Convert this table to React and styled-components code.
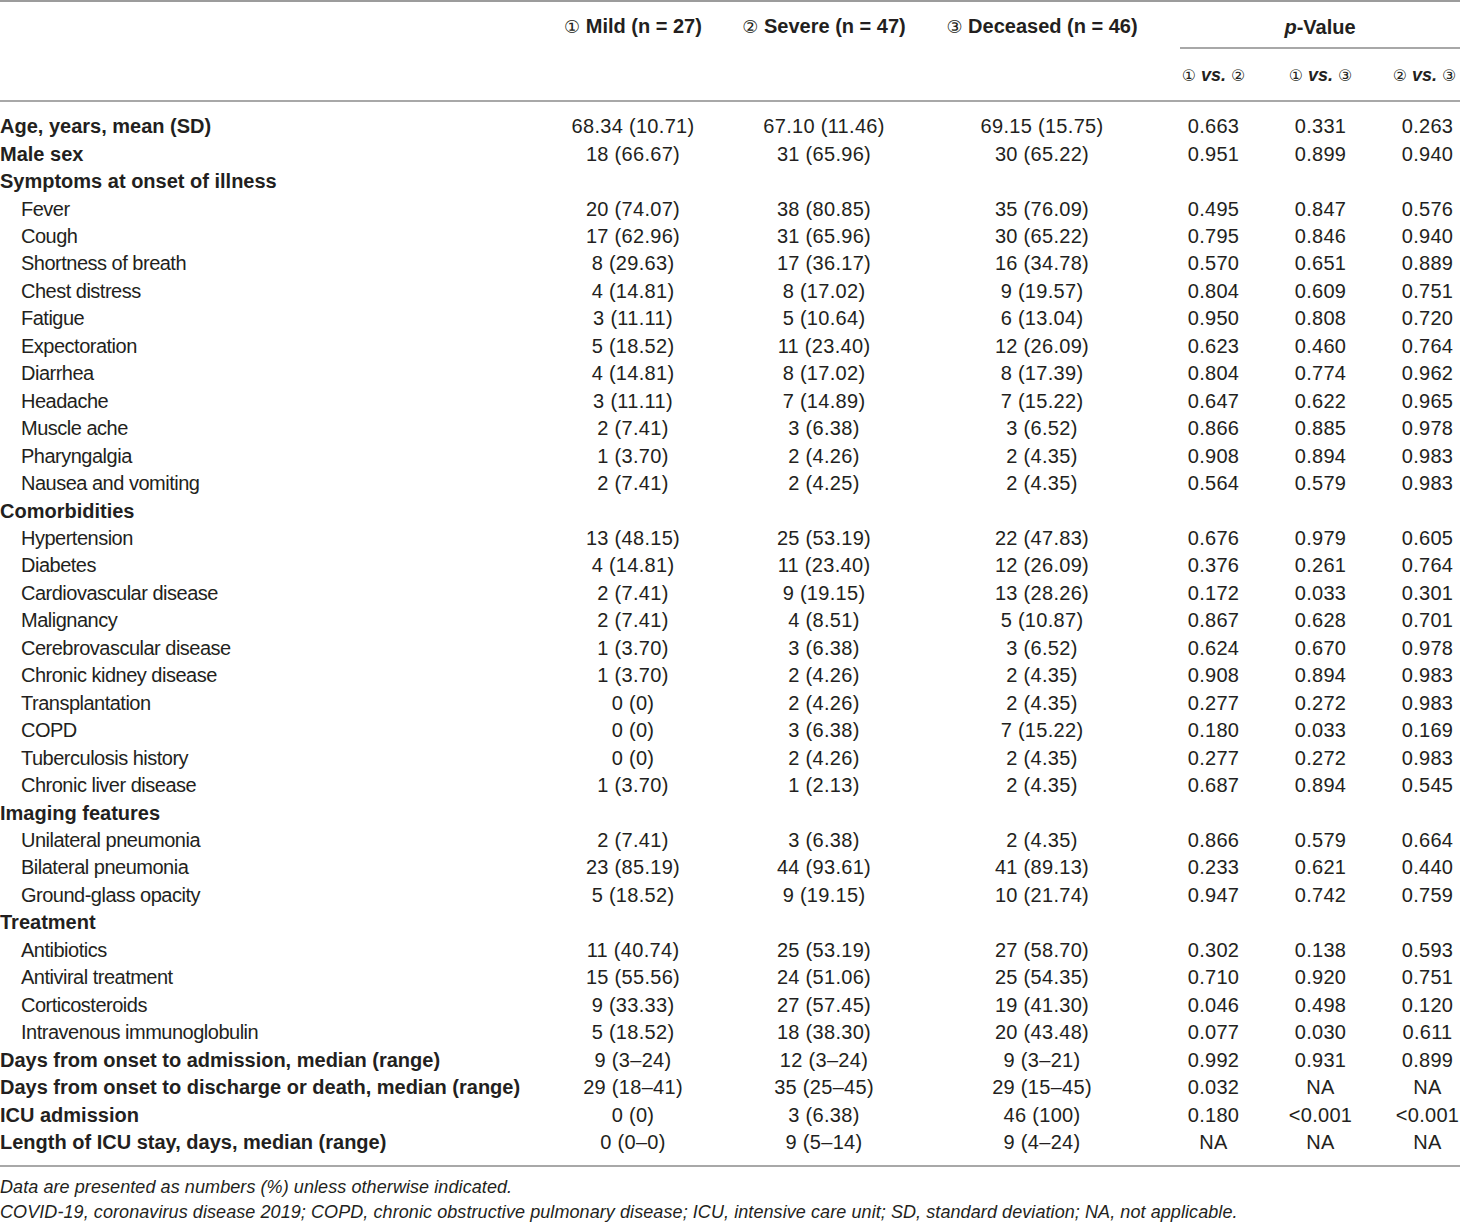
import React from "react";
import styled, { createGlobalStyle } from "styled-components";

const GlobalStyle = createGlobalStyle`
  html, body {
    margin: 0;
    padding: 0;
    background: #ffffff;
  }
  body {
    font-family: "Liberation Sans", Arial, sans-serif;
    color: #231f20;
  }
`;

const COLS = "542px 182px 200px 236px 107px 107px 86px";

const rows = [
  { label: "Age, years, mean (SD)", bold: true, v: ["68.34 (10.71)", "67.10 (11.46)", "69.15 (15.75)", "0.663", "0.331", "0.263"] },
  { label: "Male sex", bold: true, v: ["18 (66.67)", "31 (65.96)", "30 (65.22)", "0.951", "0.899", "0.940"] },
  { label: "Symptoms at onset of illness", bold: true },
  { label: "Fever", v: ["20 (74.07)", "38 (80.85)", "35 (76.09)", "0.495", "0.847", "0.576"] },
  { label: "Cough", v: ["17 (62.96)", "31 (65.96)", "30 (65.22)", "0.795", "0.846", "0.940"] },
  { label: "Shortness of breath", v: ["8 (29.63)", "17 (36.17)", "16 (34.78)", "0.570", "0.651", "0.889"] },
  { label: "Chest distress", v: ["4 (14.81)", "8 (17.02)", "9 (19.57)", "0.804", "0.609", "0.751"] },
  { label: "Fatigue", v: ["3 (11.11)", "5 (10.64)", "6 (13.04)", "0.950", "0.808", "0.720"] },
  { label: "Expectoration", v: ["5 (18.52)", "11 (23.40)", "12 (26.09)", "0.623", "0.460", "0.764"] },
  { label: "Diarrhea", v: ["4 (14.81)", "8 (17.02)", "8 (17.39)", "0.804", "0.774", "0.962"] },
  { label: "Headache", v: ["3 (11.11)", "7 (14.89)", "7 (15.22)", "0.647", "0.622", "0.965"] },
  { label: "Muscle ache", v: ["2 (7.41)", "3 (6.38)", "3 (6.52)", "0.866", "0.885", "0.978"] },
  { label: "Pharyngalgia", v: ["1 (3.70)", "2 (4.26)", "2 (4.35)", "0.908", "0.894", "0.983"] },
  { label: "Nausea and vomiting", v: ["2 (7.41)", "2 (4.25)", "2 (4.35)", "0.564", "0.579", "0.983"] },
  { label: "Comorbidities", bold: true },
  { label: "Hypertension", v: ["13 (48.15)", "25 (53.19)", "22 (47.83)", "0.676", "0.979", "0.605"] },
  { label: "Diabetes", v: ["4 (14.81)", "11 (23.40)", "12 (26.09)", "0.376", "0.261", "0.764"] },
  { label: "Cardiovascular disease", v: ["2 (7.41)", "9 (19.15)", "13 (28.26)", "0.172", "0.033", "0.301"] },
  { label: "Malignancy", v: ["2 (7.41)", "4 (8.51)", "5 (10.87)", "0.867", "0.628", "0.701"] },
  { label: "Cerebrovascular disease", v: ["1 (3.70)", "3 (6.38)", "3 (6.52)", "0.624", "0.670", "0.978"] },
  { label: "Chronic kidney disease", v: ["1 (3.70)", "2 (4.26)", "2 (4.35)", "0.908", "0.894", "0.983"] },
  { label: "Transplantation", v: ["0 (0)", "2 (4.26)", "2 (4.35)", "0.277", "0.272", "0.983"] },
  { label: "COPD", v: ["0 (0)", "3 (6.38)", "7 (15.22)", "0.180", "0.033", "0.169"] },
  { label: "Tuberculosis history", v: ["0 (0)", "2 (4.26)", "2 (4.35)", "0.277", "0.272", "0.983"] },
  { label: "Chronic liver disease", v: ["1 (3.70)", "1 (2.13)", "2 (4.35)", "0.687", "0.894", "0.545"] },
  { label: "Imaging features", bold: true },
  { label: "Unilateral pneumonia", v: ["2 (7.41)", "3 (6.38)", "2 (4.35)", "0.866", "0.579", "0.664"] },
  { label: "Bilateral pneumonia", v: ["23 (85.19)", "44 (93.61)", "41 (89.13)", "0.233", "0.621", "0.440"] },
  { label: "Ground-glass opacity", v: ["5 (18.52)", "9 (19.15)", "10 (21.74)", "0.947", "0.742", "0.759"] },
  { label: "Treatment", bold: true },
  { label: "Antibiotics", v: ["11 (40.74)", "25 (53.19)", "27 (58.70)", "0.302", "0.138", "0.593"] },
  { label: "Antiviral treatment", v: ["15 (55.56)", "24 (51.06)", "25 (54.35)", "0.710", "0.920", "0.751"] },
  { label: "Corticosteroids", v: ["9 (33.33)", "27 (57.45)", "19 (41.30)", "0.046", "0.498", "0.120"] },
  { label: "Intravenous immunoglobulin", v: ["5 (18.52)", "18 (38.30)", "20 (43.48)", "0.077", "0.030", "0.611"] },
  { label: "Days from onset to admission, median (range)", bold: true, v: ["9 (3–24)", "12 (3–24)", "9 (3–21)", "0.992", "0.931", "0.899"] },
  { label: "Days from onset to discharge or death, median (range)", bold: true, v: ["29 (18–41)", "35 (25–45)", "29 (15–45)", "0.032", "NA", "NA"] },
  { label: "ICU admission", bold: true, v: ["0 (0)", "3 (6.38)", "46 (100)", "0.180", "<0.001", "<0.001"] },
  { label: "Length of ICU stay, days, median (range)", bold: true, v: ["0 (0–0)", "9 (5–14)", "9 (4–24)", "NA", "NA", "NA"] },
];

const App = () => (
  <>
    <GlobalStyle />
    <Page>
      <Head>
        <GroupHead $col={2}>
          <Circ>①</Circ> Mild (n = 27)
        </GroupHead>
        <GroupHead $col={3}>
          <Circ>②</Circ> Severe (n = 47)
        </GroupHead>
        <GroupHead $col={4}>
          <Circ>③</Circ> Deceased (n = 46)
        </GroupHead>
        <PHead>
          <PLabel>
            <em>p</em>-Value
          </PLabel>
        </PHead>
        <SubHead $col={5}>
          <SmallCirc>①</SmallCirc> <Vs>vs.</Vs> <SmallCirc>②</SmallCirc>
        </SubHead>
        <SubHead $col={6}>
          <SmallCirc>①</SmallCirc> <Vs>vs.</Vs> <SmallCirc>③</SmallCirc>
        </SubHead>
        <SubHead $col={7} $last>
          <SmallCirc>②</SmallCirc> <Vs>vs.</Vs> <SmallCirc>③</SmallCirc>
        </SubHead>
      </Head>
      <Body>
        {rows.map((r) => (
          <Row key={r.label}>
            <Label $bold={r.bold} $indent={!r.bold}>
              {r.label}
            </Label>
            {(r.v || ["", "", "", "", "", ""]).map((val, i) => (
              <Cell key={i} $last={i === 5}>
                {val}
              </Cell>
            ))}
          </Row>
        ))}
      </Body>
      <Notes>
        <Note>Data are presented as numbers (%) unless otherwise indicated.</Note>
        <Note>
          COVID-19, coronavirus disease 2019; COPD, chronic obstructive pulmonary disease; ICU,
          intensive care unit; SD, standard deviation; NA, not applicable.
        </Note>
      </Notes>
    </Page>
  </>
);

const Page = styled.div`
  width: 1460px;
  font-size: 20px;
  color: #231f20;
`;

const Head = styled.div`
  display: grid;
  grid-template-columns: ${COLS};
  grid-template-rows: 50px 50px;
  border-top: 2px solid #9c9c9c;
  border-bottom: 2px solid #a8a8a8;
  box-sizing: border-box;
  height: 102px;
`;

const GroupHead = styled.div`
  grid-column: ${(p) => p.$col};
  grid-row: 1;
  text-align: center;
  font-weight: 700;
  padding-top: 13px;
  white-space: nowrap;
`;

const Circ = styled.span`
  font-family: "DejaVu Sans", sans-serif;
  font-weight: 400;
  font-size: 18px;
`;

const SmallCirc = styled(Circ)`
  font-size: 16px;
`;

const PHead = styled.div`
  grid-column: 5 / span 3;
  grid-row: 1;
  padding-left: 20px;
`;

const PLabel = styled.div`
  height: 47px;
  box-sizing: border-box;
  padding-top: 14px;
  border-bottom: 2px solid #a8a8a8;
  text-align: center;
  font-weight: 700;
`;

const SubHead = styled.div`
  grid-column: ${(p) => p.$col};
  grid-row: 2;
  text-align: center;
  padding-top: 13px;
  padding-left: ${(p) => (p.$last ? "15px" : "0")};
  white-space: nowrap;
  font-size: 18px;
`;

const Vs = styled.span`
  font-weight: 700;
  font-style: italic;
`;

const Body = styled.div`
  padding: 11px 0 9px;
  border-bottom: 2px solid #a8a8a8;
`;

const Row = styled.div`
  display: grid;
  grid-template-columns: ${COLS};
  height: 27.46px;
  align-items: center;
`;

const Label = styled.div`
  font-weight: ${(p) => (p.$bold ? 700 : 400)};
  letter-spacing: ${(p) => (p.$bold ? "0" : "-0.5px")};
  padding-left: ${(p) => (p.$indent ? "21px" : "0")};
  white-space: nowrap;
`;

const Cell = styled.div`
  text-align: center;
  letter-spacing: 0.3px;
  padding-left: ${(p) => (p.$last ? "21px" : "0")};
  white-space: nowrap;
`;

const Notes = styled.div`
  padding-top: 8px;
`;

const Note = styled.div`
  font-style: italic;
  font-size: 18px;
  letter-spacing: 0.08px;
  line-height: 25px;
`;

export default App;
